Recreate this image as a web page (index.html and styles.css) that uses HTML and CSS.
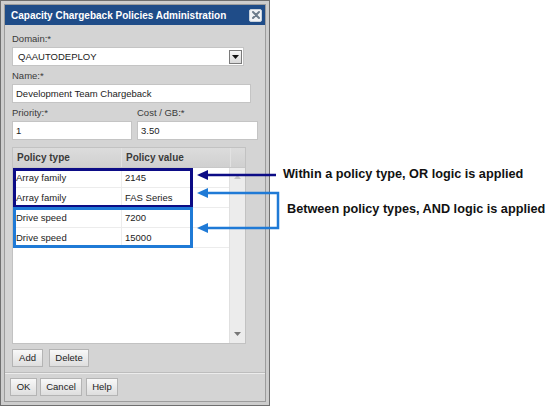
FILE: index.html
```html
<!DOCTYPE html>
<html lang="en">
<head>
  <meta charset="UTF-8">
  <title>Capacity Chargeback Policies Administration</title>
  <link rel="stylesheet" href="styles.css">
</head>
<body>
  <div class="canvas">
    <div class="dialog">
      <div class="window">
        <div class="titlebar">
          <span class="title">Capacity Chargeback Policies Administration</span>
          <span class="close">
            <svg width="10" height="10" viewBox="0 0 10 10"><path d="M2 2 L8 8 M8 2 L2 8" stroke="#6d7c8c" stroke-width="2" stroke-linecap="round"/></svg>
          </span>
        </div>

        <div class="form">
          <div class="label">Domain:*</div>
          <div class="select">
            <span>QAAUTODEPLOY</span>
            <span class="dd"><svg width="7" height="4" viewBox="0 0 7 4"><path d="M0 0 H7 L3.5 4 Z" fill="#111"/></svg></span>
          </div>

          <div class="label">Name:*</div>
          <div class="input input-name">Development Team Chargeback</div>

          <div class="pair">
            <div class="field">
              <div class="label">Priority:*</div>
              <div class="input input-priority">1</div>
            </div>
            <div class="field">
              <div class="label">Cost / GB:*</div>
              <div class="input input-cost">3.50</div>
            </div>
          </div>

          <div class="grid">
            <div class="grid-head">
              <div class="th th-type">Policy type</div>
              <div class="th th-value">Policy value</div>
              <div class="th th-scroll"></div>
            </div>
            <div class="grid-main">
              <div class="rows">
                <div class="row"><div class="td td-type">Array family</div><div class="td">2145</div></div>
                <div class="row"><div class="td td-type">Array family</div><div class="td">FAS Series</div></div>
                <div class="row"><div class="td td-type">Drive speed</div><div class="td">7200</div></div>
                <div class="row"><div class="td td-type">Drive speed</div><div class="td">15000</div></div>
              </div>
              <div class="scroll">
                <svg width="7" height="4" viewBox="0 0 7 4"><path d="M0 4 H7 L3.5 0 Z" fill="#c4c4c4"/></svg>
                <svg width="7" height="4" viewBox="0 0 7 4"><path d="M0 0 H7 L3.5 4 Z" fill="#777"/></svg>
              </div>
            </div>
          </div>

          <div class="buttons">
            <span class="btn btn-add">Add</span>
            <span class="btn btn-delete">Delete</span>
          </div>
        </div>

        <div class="footer">
          <span class="btn btn-ok">OK</span>
          <span class="btn btn-cancel">Cancel</span>
          <span class="btn btn-help">Help</span>
        </div>
      </div>
    </div>

    <!-- callouts drawn over the screenshot -->
    <div class="box box-or"></div>
    <div class="box box-and"></div>
    <svg class="arrows" width="100" height="80" viewBox="0 0 100 80">
      <path d="M86 15 H16" stroke="#0c0c86" stroke-width="2.5" fill="none"/>
      <path d="M7 15 L18 10 L18 20 Z" fill="#0c0c86"/>
      <path d="M16 33 H88 V68 H16" stroke="#1f7ad6" stroke-width="2.5" fill="none"/>
      <path d="M7 33 L18 28 L18 38 Z" fill="#1f7ad6"/>
      <path d="M7 68 L18 63 L18 73 Z" fill="#1f7ad6"/>
    </svg>
    <div class="note note-or">Within a policy type, OR logic is applied</div>
    <div class="note note-and">Between policy types, AND logic is applied</div>
  </div>
</body>
</html>
```

FILE: styles.css
```css
body {
  margin: 0;
  background: #fff;
  font-family: 'Liberation Sans', Arial, sans-serif;
  color: #333;
}

.canvas {
  position: relative;
  width: 557px;
  height: 407px;
}

.dialog {
  width: 270px;
  height: 406px;
  box-sizing: border-box;
  border: 1px solid #6f6f6f;
  padding: 3px;
  background: #cdcdcd;
}

.window {
  height: 100%;
  box-sizing: border-box;
  border: 1px solid #9c9c9c;
  background: #d4d4d4;
  display: flex;
  flex-direction: column;
}

.titlebar {
  height: 20px;
  background: #1f4c88;
  display: flex;
  align-items: center;
  justify-content: space-between;
  padding: 0 3px 0 6px;
}

.title {
  color: #fff;
  font-weight: bold;
  font-size: 10px;
}

.close {
  width: 13px;
  height: 13px;
  box-sizing: border-box;
  background: #f1f3f6;
  border: 1px solid #c9d2dc;
  border-radius: 2px;
  display: flex;
  align-items: center;
  justify-content: center;
}

.form {
  padding: 6px 0 0 7px;
}

.label {
  font-size: 9.5px;
  line-height: 16px;
  height: 16px;
  color: #3a3a3a;
  margin-top: 2px;
}

.form > .label:first-child {
  margin-top: 0;
}

.select,
.input {
  height: 19px;
  box-sizing: border-box;
  background: #fff;
  border: 1px solid #c4c4c4;
  font-size: 9.5px;
  line-height: 17px;
  color: #222;
}

.select {
  width: 232px;
  display: flex;
  align-items: center;
  justify-content: space-between;
  padding: 0 1px 0 5px;
}

.dd {
  width: 13px;
  height: 14px;
  box-sizing: border-box;
  border: 1px solid #7a7a7a;
  background: linear-gradient(#f6f6f6, #d8d8d8);
  display: flex;
  align-items: center;
  justify-content: center;
}

.input {
  padding-left: 3px;
}

.input-name {
  width: 239px;
}

.pair {
  display: flex;
  gap: 5px;
}

.input-priority {
  width: 120px;
}

.input-cost {
  width: 121px;
}

.grid {
  margin-top: 7px;
  width: 234px;
  height: 197px;
  box-sizing: border-box;
  border: 1px solid #c2c2c2;
  display: flex;
  flex-direction: column;
}

.grid-head {
  height: 19px;
  display: flex;
  background: linear-gradient(#dcdcdc, #d0d0d0);
  border-bottom: 1px solid #c8c8c8;
}

.th {
  font-size: 10px;
  font-weight: bold;
  line-height: 19px;
  color: #3a3a3a;
  box-sizing: border-box;
}

.th-type {
  width: 109px;
  padding-left: 4px;
  border-right: 1px solid #e2e2e2;
}

.th-value {
  width: 108px;
  padding-left: 4px;
}

.th-scroll {
  width: 15px;
  border-left: 1px solid #e2e2e2;
}

.grid-main {
  flex: 1;
  display: flex;
  background: #fff;
}

.rows {
  flex: 1;
}

.row {
  height: 20px;
  box-sizing: border-box;
  display: flex;
  border-bottom: 1px solid #ececec;
}

.td {
  font-size: 9.5px;
  line-height: 19px;
  color: #222;
  padding-left: 3px;
  box-sizing: border-box;
}

.td-type {
  width: 109px;
  border-right: 1px solid #ececec;
}

.scroll {
  width: 16px;
  background: #ececec;
  border-left: 1px solid #e0e0e0;
  display: flex;
  flex-direction: column;
  justify-content: space-between;
  align-items: center;
  padding: 7px 0 7px;
  box-sizing: border-box;
}

.buttons {
  margin-top: 5px;
  display: flex;
  gap: 6px;
}

.btn {
  height: 18px;
  box-sizing: border-box;
  border: 1px solid #b4b4b4;
  background: linear-gradient(#f8f8f8, #dedede);
  font-size: 9.5px;
  line-height: 16px;
  color: #222;
  text-align: center;
}

.btn-add { width: 31px; }
.btn-delete { width: 40px; }
.btn-ok { width: 27px; }
.btn-cancel { width: 42px; }
.btn-help { width: 32px; }

.footer {
  margin-top: 5px;
  border-top: 1px solid #bdbdbd;
  box-shadow: inset 0 1px 0 #ececec;
  padding: 5px 0 0 5px;
  display: flex;
  gap: 3px;
}

.footer .btn-help {
  margin-left: 1px;
}

/* callouts */

.box {
  position: absolute;
  left: 13px;
  width: 180px;
  box-sizing: border-box;
  border: 3px solid;
}

.box-or {
  top: 168px;
  height: 40px;
  border-color: #0c0c86;
}

.box-and {
  top: 207px;
  height: 41px;
  border-color: #1f7ad6;
}

.arrows {
  position: absolute;
  left: 190px;
  top: 160px;
}

.note {
  position: absolute;
  font-size: 12.7px;
  font-weight: bold;
  color: #111;
  white-space: nowrap;
}

.note-or {
  left: 283px;
  top: 167px;
}

.note-and {
  left: 287px;
  top: 202px;
}
```
